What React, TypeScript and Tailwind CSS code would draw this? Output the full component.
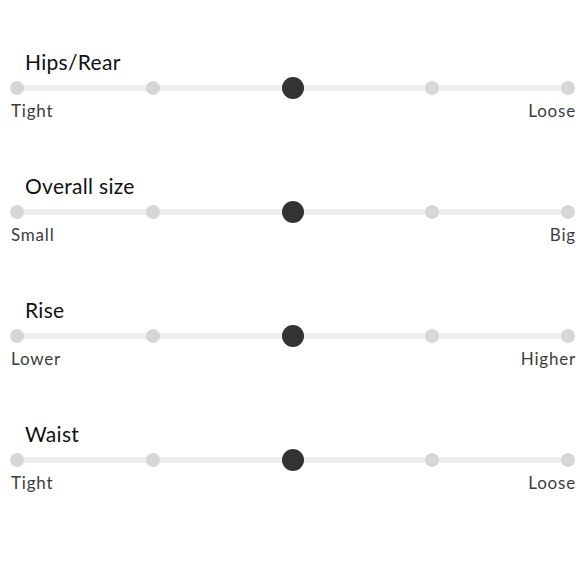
import React from "react";

const sections = [
  { title: "Hips/Rear", left: "Tight", right: "Loose" },
  { title: "Overall size", left: "Small", right: "Big" },
  { title: "Rise", left: "Lower", right: "Higher" },
  { title: "Waist", left: "Tight", right: "Loose" },
];

function Slider() {
  return (
    <div className="relative h-[22px] flex items-center">
      <div className="absolute left-[7px] right-[7px] h-[6px] bg-[#eeeeee]" />
      <div className="relative w-full flex items-center justify-between">
        <div className="w-[14px] h-[14px] rounded-full bg-[#d6d6d6]" />
        <div className="w-[14px] h-[14px] rounded-full bg-[#d6d6d6]" />
        <div className="w-[22px] h-[22px] rounded-full bg-[#333333]" />
        <div className="w-[14px] h-[14px] rounded-full bg-[#d6d6d6]" />
        <div className="w-[14px] h-[14px] rounded-full bg-[#d6d6d6]" />
      </div>
    </div>
  );
}

export default function App() {
  return (
    <div
      className="w-[580px] h-[580px] overflow-hidden bg-white pt-[48px] pl-[10px] pr-[5px] flex flex-col gap-[49px]"
      style={{ fontFamily: "Lato, 'Noto Sans', sans-serif" }}
    >
      {sections.map((s, i) => (
        <div key={i} className="flex flex-col">
          <div className="pl-[15px] pb-[1px] text-[21px] leading-[28px] tracking-[0.3px] text-[#111111]">{s.title}</div>
          <Slider />
          <div className="flex justify-between text-[17px] leading-[24px] tracking-[0.8px] text-[#3c3c3c] pl-[1px]">
            <span>{s.left}</span>
            <span className="-mr-[1px]">{s.right}</span>
          </div>
        </div>
      ))}
    </div>
  );
}
